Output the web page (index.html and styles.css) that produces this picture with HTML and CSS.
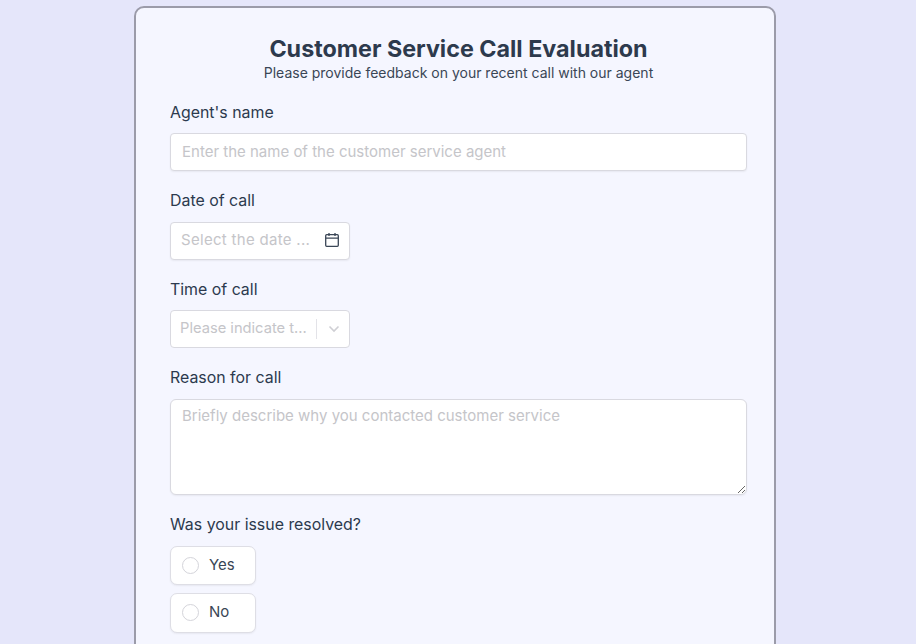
FILE: index.html
```html
<!DOCTYPE html>
<html lang="en">
<head>
<meta charset="utf-8">
<title>Customer Service Call Evaluation</title>
<link rel="stylesheet" href="styles.css">
</head>
<body>
<main class="card">
  <header class="head">
    <h1 class="title">Customer Service Call Evaluation</h1>
    <p class="sub">Please provide feedback on your recent call with our agent</p>
  </header>
  <form class="form">
    <div class="field">
      <label class="label">Agent's name</label>
      <input class="box text-input" type="text" placeholder="Enter the name of the customer service agent">
    </div>
    <div class="field">
      <label class="label">Date of call</label>
      <div class="box narrow date">
        <span class="ph date-ph">Select the date ...</span>
        <svg class="cal" width="16" height="16" viewBox="0 0 16 16" fill="none" stroke="#3a4656" stroke-width="1.3"><rect x="1.700" y="2.700" width="12.600" height="11.600" rx="1"/><path d="M1.700 6.200h12.600M5 1v3M11 1v3"/></svg>
      </div>
    </div>
    <div class="field">
      <label class="label">Time of call</label>
      <div class="box narrow select">
        <span class="ph select-ph">Please indicate t...</span>
        <span class="sep"></span>
        <svg class="chev" width="12" height="8" viewBox="0 0 12 8" fill="none" stroke="#cfcfd4" stroke-width="1.6"><path d="M1.500 1.500 6 6l4.500-4.500"/></svg>
      </div>
    </div>
    <div class="field">
      <label class="label">Reason for call</label>
      <textarea class="box area" placeholder="Briefly describe why you contacted customer service"></textarea>
    </div>
    <div class="field">
      <label class="label">Was your issue resolved?</label>
      <div class="options">
        <div class="option"><span class="radio"></span><span class="opt-text">Yes</span></div>
        <div class="option"><span class="radio"></span><span class="opt-text">No</span></div>
      </div>
    </div>
  </form>
</main>
</body>
</html>
```
FILE: styles.css
```css
* { box-sizing: border-box; }
html, body { margin: 0; height: 100%; overflow: hidden; }
body {
  background: #e5e6fa;
  font-family: "Inter", "Liberation Sans", sans-serif;
  color: #2f3b4c;
  padding: 6px 6px 0 0;
  display: flex;
  justify-content: center;
}
.card {
  width: 642px;
  height: 700px;
  flex: none;
  background: #f5f6ff;
  border: 2px solid #9b9ba9;
  border-radius: 10px;
  padding: 27px 27px 0 34px;
}
.head { text-align: center; }
.title { margin: 0; font-size: 23.300px; line-height: 28px; font-weight: 700; color: #2d3a4d; }
.sub { margin: 0; font-size: 14px; line-height: 20px; color: #3a4656; }
.form { margin-top: 19.500px; display: flex; flex-direction: column; gap: 20.170px; }
.field { display: flex; flex-direction: column; }
.label { font-size: 15.900px; line-height: 20px; margin-bottom: 10.500px; color: #2c3a4e; }
.box {
  background: #fff;
  border: 1px solid #d9d9e0;
  border-radius: 4px;
  box-shadow: 0 1px 2px rgba(0,0,0,.06);
  font: inherit;
  font-size: 15px;
  color: #2f3b4c;
}
.box::placeholder, .ph { color: #c5c5c9; opacity: 1; }
.text-input { height: 38px; padding: 0 11px 2px; width: 577px; outline: none; }
.narrow { width: 180px; height: 38px; display: flex; align-items: center; }
.date { padding: 0 9px 2px 10px; justify-content: space-between; }
.select { padding: 0 10px 0 9px; box-shadow: none; }
.date-ph { white-space: nowrap; letter-spacing: .3px; }
.select-ph { white-space: nowrap; width: 127px; flex: none; font-size: 14.700px; padding-bottom: 2px; }
.cal { flex: none; }
.sep { width: 1px; height: 20px; background: #e3e3e8; margin: 0 11px 0 9px; flex: none; }
.chev { flex: none; }
.area { width: 577px; height: 96px; padding: 6px 11px; resize: both; outline: none; display: block; border-radius: 6px; }
.options { display: flex; flex-direction: column; gap: 8px; }
.option {
  width: 86px; height: 39.500px;
  display: flex; align-items: center; gap: 10px;
  padding: 0 11px;
  background: #fff;
  border: 1px solid #dedee5;
  border-radius: 7px;
  box-shadow: 0 1px 2px rgba(0,0,0,.06);
  font-size: 15px;
  color: #3a4656;
}
.radio { width: 17px; height: 17px; border: 1px solid #d4d4da; border-radius: 50%; flex: none; }
.opt-text { padding-bottom: 2px; }
```
